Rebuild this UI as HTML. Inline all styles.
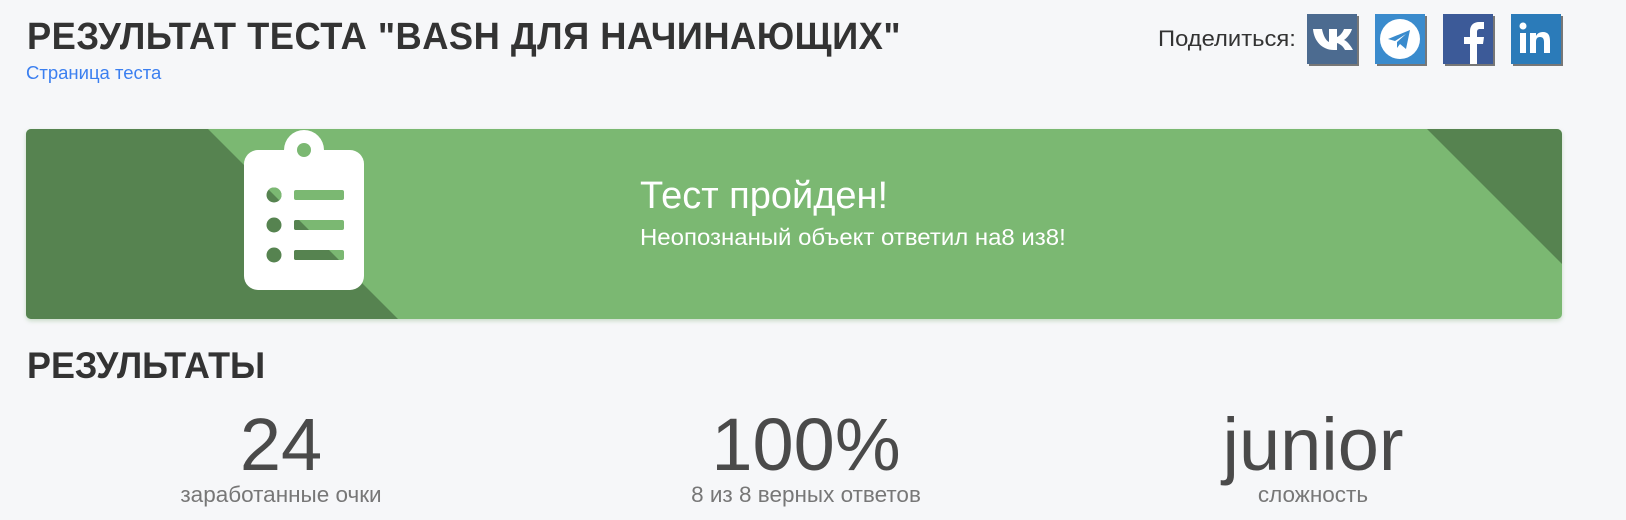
<!DOCTYPE html>
<html><head><meta charset="utf-8"><style>
*{margin:0;padding:0;box-sizing:border-box}
body{width:1626px;height:520px;background:#f6f7f9;font-family:"Liberation Sans",sans-serif;position:relative;overflow:hidden}
.abs{position:absolute;white-space:nowrap}
h1{position:absolute;left:27px;top:16px;font-size:38px;font-weight:bold;color:#333;letter-spacing:0.5px;transform:scaleX(0.955);transform-origin:left top;white-space:nowrap}
.link{left:26px;top:62px;font-size:18.5px;color:#3b7ff0}
.share{left:1158px;top:26px;font-size:22px;color:#333;transform:scaleX(1.08);transform-origin:left top}
.ic{position:absolute;top:14px;width:50px;height:50px;box-shadow:2px 2px 0 #777}
.banner{position:absolute;left:26px;top:129px;width:1536px;height:190px;border-radius:5px;overflow:hidden;box-shadow:0 2px 4px rgba(100,160,90,.3)}
.t1{left:640px;top:175px;font-size:38px;color:#fff}
.t2{left:640px;top:224px;font-size:23.5px;color:#fff;transform:scaleX(1.02);transform-origin:left top}
h2{position:absolute;left:27px;top:345px;font-size:37px;font-weight:bold;color:#333;transform:scaleX(0.97);transform-origin:left top}
.num{position:absolute;width:500px;text-align:center;top:402px;font-size:74px;color:#4a4a4a}
.lbl{position:absolute;width:500px;text-align:center;top:482px;font-size:22.5px;color:#777}
</style></head><body>
<h1>РЕЗУЛЬТАТ ТЕСТА "BASH ДЛЯ НАЧИНАЮЩИХ"</h1>
<div class="abs link">Страница теста</div>
<div class="abs share">Поделиться:</div>
<div class="ic" style="left:1307px;background:#4c6b90"><svg width="50" height="50" viewBox="0 0 50 50"><path d="M6 15h9c1 6 4 12 7 13V15h8v8c3-1 6-5 7-8h8c-1 4-5 9-8 11 3 1 7 6 9 10h-8c-2-4-5-6-8-7v7h-3C15 36 7 27 6 15z" fill="#fff"/></svg></div>
<div class="ic" style="left:1375px;background:#3a8bcd"><svg width="50" height="50" viewBox="0 0 50 50"><circle cx="25" cy="25" r="20" fill="#fff"/><path d="M13 25l22-9-4 19-6-5-3 4v-6l9-8-11 7z" fill="#3a8bcd"/></svg></div>
<div class="ic" style="left:1443px;background:#3c5a98"><svg width="50" height="50" viewBox="0 0 50 50"><path d="M27 50V30h-6v-7h6v-6c0-6 4-9 9-9h5v7h-4c-2 0-3 1-3 3v5h7l-1 7h-6v20z" fill="#fff"/></svg></div>
<div class="ic" style="left:1511px;background:#2b7bb9"><svg width="50" height="50" viewBox="0 0 50 50"><rect x="9" y="19" width="6" height="20" fill="#fff"/><circle cx="12" cy="12" r="3.5" fill="#fff"/><path d="M19 19h6v3c1-2 3-4 7-4 5 0 7 3 7 9v12h-6V28c0-3-1-5-4-5s-4 2-4 5v11h-6z" fill="#fff"/></svg></div>
<div class="banner"><svg width="1536" height="190" viewBox="0 0 1536 190">
<rect width="1536" height="190" fill="#7bb872"/>
<polygon points="0,0 182,0 372,190 0,190" fill="#568350"/>
<polygon points="1401,0 1536,0 1536,135" fill="#568350"/>
<g transform="translate(-26,-129)">
<circle cx="304" cy="150" r="20" fill="#fff"/>
<rect x="244" y="150" width="120" height="140" rx="14" fill="#fff"/>
<circle cx="304" cy="150" r="7" fill="#7bb872"/>
<circle cx="274" cy="195" r="7.5" fill="#568350"/>
<circle cx="274" cy="225" r="7.5" fill="#568350"/>
<circle cx="274" cy="255" r="7.5" fill="#568350"/>
<rect x="294" y="190" width="50" height="10" rx="2" fill="#7bb872"/>
<rect x="294" y="220" width="50" height="10" rx="2" fill="#7bb872"/>
<rect x="294" y="250" width="50" height="10" rx="2" fill="#7bb872"/>
<clipPath id="c"><polygon points="208,129 600,129 600,319 398,319"/></clipPath>
<g clip-path="url(#c)" fill="#7bb872">
<circle cx="274" cy="195" r="7.5"/><circle cx="274" cy="225" r="7.5"/><circle cx="274" cy="255" r="7.5"/>
</g>
<clipPath id="d"><polygon points="0,129 208,129 398,319 0,319"/></clipPath>
<g clip-path="url(#d)" fill="#568350">
<rect x="294" y="190" width="50" height="10" rx="2"/><rect x="294" y="220" width="50" height="10" rx="2"/><rect x="294" y="250" width="50" height="10" rx="2"/>
</g>
</g></svg></div>
<div class="abs t1">Тест пройден!</div>
<div class="abs t2">Неопознаный объект ответил на8 из8!</div>
<h2>РЕЗУЛЬТАТЫ</h2>
<div class="num" style="left:31px">24</div><div class="lbl" style="left:31px">заработанные очки</div>
<div class="num" style="left:556px">100%</div><div class="lbl" style="left:556px">8 из 8 верных ответов</div>
<div class="num" style="left:1063px">junior</div><div class="lbl" style="left:1063px">сложность</div>
</body></html>
